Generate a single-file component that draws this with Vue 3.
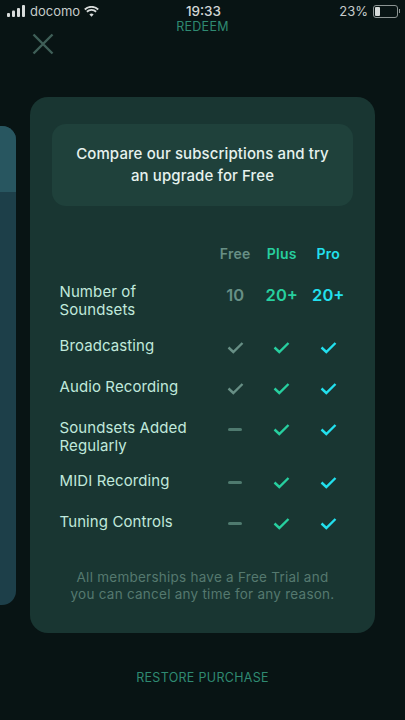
<template>
  <div class="screen">
    <div class="status-bar">
      <div class="status-left">
        <svg class="signal" width="18" height="12" viewBox="0 0 18 12">
          <rect x="0" y="8" width="3" height="4" rx="1" />
          <rect x="5" y="5.5" width="3" height="6.5" rx="1" />
          <rect x="10" y="3" width="3" height="9" rx="1" />
          <rect x="15" y="0" width="3" height="12" rx="1" />
        </svg>
        <span>docomo</span>
        <svg class="wifi" width="15" height="11" viewBox="0 0 16 12">
          <path d="M8 11.8 L5.7 9.2 A3.4 3.4 0 0 1 10.3 9.2 Z" />
          <path d="M3.6 7 L2.3 5.5 A8.4 8.4 0 0 1 13.7 5.5 L12.4 7 A6.4 6.4 0 0 0 3.6 7 Z" />
          <path d="M1.3 4.5 L0 3 A11.8 11.8 0 0 1 16 3 L14.7 4.5 A9.8 9.8 0 0 0 1.3 4.5 Z" />
        </svg>
      </div>
      <div class="status-time">19:33</div>
      <div class="status-right">
        <span>23%</span>
        <div class="battery"><div class="battery-level"></div></div>
        <div class="battery-cap"></div>
      </div>
    </div>

    <div class="top-row">
      <svg class="close" width="22" height="22" viewBox="0 0 22 22">
        <path d="M1.5 1.5 L20.5 20.5 M20.5 1.5 L1.5 20.5" />
      </svg>
      <div class="redeem">REDEEM</div>
    </div>

    <div class="carousel">
      <div class="side-card">
        <div class="side-top"></div>
      </div>
      <div class="card">
        <div class="card-header">Compare our subscriptions and try an upgrade for Free</div>

        <div class="plans">
          <div class="plan free">Free</div>
          <div class="plan plus">Plus</div>
          <div class="plan pro">Pro</div>
        </div>

        <div v-for="row in rows" :key="row.label" class="row" :class="{ tall: row.tall, drop: row.drop }">
          <div class="row-label">{{ row.label }}</div>
          <div v-for="(val, i) in row.values" :key="i" class="cell" :class="planNames[i]">
            <svg v-if="val === 'check'" width="17" height="13" viewBox="0 0 17 13">
              <path class="check" d="M1.5 6.5 L6.3 11 L15.5 2" />
            </svg>
            <div v-else-if="val === 'dash'" class="dash"></div>
            <span v-else class="count">{{ val }}</span>
          </div>
        </div>

        <p class="note">All memberships have a Free Trial and you can cancel any time for any reason.</p>
      </div>
    </div>

    <div class="restore">RESTORE PURCHASE</div>
  </div>
</template>

<script setup>
const planNames = ['free', 'plus', 'pro']

const rows = [
  { label: 'Number of Soundsets', values: ['10', '20+', '20+'], tall: true },
  { label: 'Broadcasting', values: ['check', 'check', 'check'] },
  { label: 'Audio Recording', values: ['check', 'check', 'check'] },
  { label: 'Soundsets Added Regularly', values: ['dash', 'check', 'check'], tall: true, drop: true },
  { label: 'MIDI Recording', values: ['dash', 'check', 'check'] },
  { label: 'Tuning Controls', values: ['dash', 'check', 'check'] },
]
</script>

<style>
html,
body {
  margin: 0;
  background: #081414;
}
</style>

<style scoped>
.screen {
  width: 405px;
  height: 720px;
  overflow: hidden;
  background: #081414;
  font-family: Inter, "Liberation Sans", sans-serif;
}

.status-bar {
  height: 20px;
  display: grid;
  grid-template-columns: 1fr auto 1fr;
  align-items: center;
  padding: 1px 5px 0 7px;
  color: #c6cccb;
  font-size: 13px;
  box-sizing: content-box;
  width: 393px;
}
.status-left {
  display: flex;
  align-items: center;
  gap: 4px;
}
.signal,
.wifi {
  fill: #d8dcdb;
}
.signal {
  margin-right: 1px;
}
.status-time {
  font-weight: 500;
  font-size: 13.5px;
  color: #d2d7d6;
}
.status-right {
  display: flex;
  align-items: center;
  justify-content: flex-end;
  gap: 5px;
}
.battery {
  width: 21px;
  height: 9px;
  padding: 1px;
  border: 1px solid #8c9493;
  border-radius: 3px;
}
.battery-level {
  width: 5px;
  height: 9px;
  background: #d8dcdb;
  border-radius: 1px;
}
.battery-cap {
  width: 1px;
  height: 4px;
  margin-left: -4px;
  background: #8c9493;
}

.top-row {
  display: grid;
  grid-template-columns: 1fr auto 1fr;
  height: 76px;
  padding-left: 32px;
  padding-right: 32px;
}
.redeem {
  grid-column: 2;
  grid-row: 1;
  color: #2f8a72;
  font-size: 12.5px;
  letter-spacing: 0.3px;
  line-height: 14px;
  margin-top: -1px;
}
.close {
  grid-column: 1;
  grid-row: 1;
  margin-top: 12px;
}
.close path {
  stroke: #3f5f58;
  stroke-width: 2.4;
  fill: none;
}

.carousel {
  display: flex;
  align-items: flex-start;
  gap: 14px;
}

.side-card {
  width: 100px;
  height: 479px;
  margin-top: 29px;
  margin-left: -84px;
  flex-shrink: 0;
  background: #1d3f49;
  border-radius: 14px;
  overflow: hidden;
}
.side-top {
  height: 66px;
  background: #285660;
}

.card {
  width: 345px;
  height: 536px;
  flex-shrink: 0;
  box-sizing: border-box;
  padding: 27px 22px 0;
  background: #193632;
  border-radius: 18px;
}
.card-header {
  height: 82px;
  box-sizing: border-box;
  padding: 19px 20px 0;
  background: #1f413b;
  border-radius: 14px;
  color: #e6f2ee;
  font-size: 15px;
  font-weight: 500;
  letter-spacing: 0.1px;
  line-height: 22px;
  text-align: center;
}

.plans,
.row {
  display: grid;
  grid-template-columns: 1fr 46.5px 46.5px 46.5px;
  align-items: center;
  padding-left: 7.5px;
  margin-right: 1.5px;
}
.plans {
  margin-top: 37px;
  height: 20px;
  margin-bottom: 12px;
}
.plan {
  grid-row: 1;
  text-align: center;
  font-size: 14px;
  font-weight: 600;
  letter-spacing: 0.3px;
}
.plan.free {
  grid-column: 2;
}
.plan.plus {
  grid-column: 3;
}
.plan.pro {
  grid-column: 4;
}
.free {
  color: #678f85;
}
.plus {
  color: #27cf9f;
}
.pro {
  color: #22e0ee;
}

.row {
  height: 41px;
}
.row.tall {
  height: 52px;
}
.row.drop {
  height: 53px;
}
.row-label {
  color: #c0e9dc;
  font-size: 15px;
  letter-spacing: 0.1px;
  line-height: 18px;
  font-weight: 400;
  padding-bottom: 3px;
  padding-right: 22px;
}
.tall .row-label {
  padding-bottom: 0;
}
.drop .row-label {
  padding-top: 3px;
}
.tall .cell {
  align-self: start;
  height: 41px;
}
.cell {
  display: flex;
  justify-content: center;
  align-items: center;
}
.check {
  fill: none;
  stroke: currentColor;
  stroke-width: 2.4;
}
.dash {
  width: 14px;
  height: 3px;
  border-radius: 2px;
  background: #4f7a6f;
}
.count {
  font-size: 16.5px;
  font-weight: 600;
  margin-top: -2px;
}

.note {
  margin: 25px 0 0;
  padding: 0 17px;
  color: #55796f;
  font-size: 13.5px;
  letter-spacing: 0.25px;
  line-height: 17px;
  text-align: center;
}

.restore {
  margin-top: 37px;
  color: #2f8a72;
  font-size: 12.5px;
  letter-spacing: 0.3px;
  text-align: center;
}
</style>
